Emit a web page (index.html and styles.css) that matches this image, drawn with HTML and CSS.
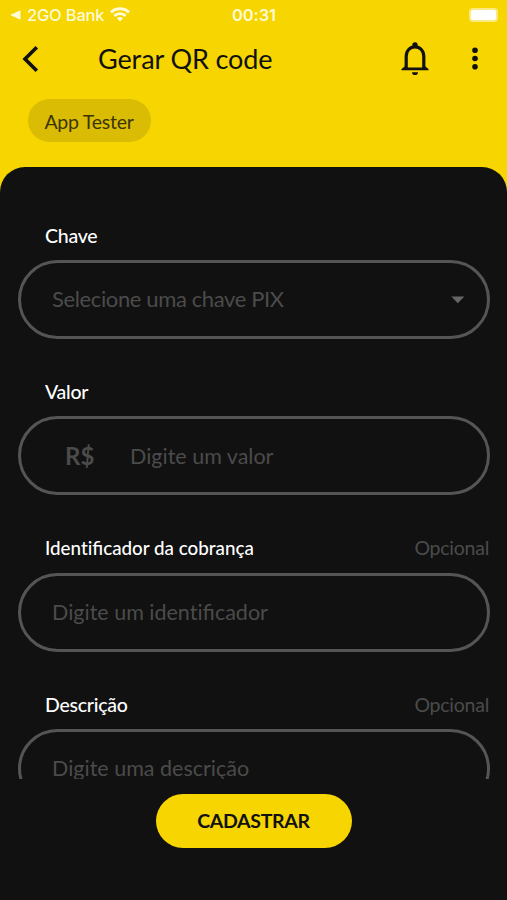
FILE: index.html
```html
<!DOCTYPE html>
<html lang="pt-BR">
<head>
  <meta charset="UTF-8">
  <title>Gerar QR code</title>
  <link rel="stylesheet" href="styles.css">
</head>
<body>

  <!-- Header -->
  <header class="header">
    <div class="status-bar">
      <div class="status-left">
        <svg width="11" height="10" viewBox="0 0 11 10"><path d="M0 5 L10.5 0.3 V9.7 Z" fill="currentColor"/></svg>
        <span class="status-app">2GO Bank</span>
        <svg class="wifi" width="20" height="15" viewBox="0 0 20 15" fill="none" stroke="currentColor" stroke-width="2.9">
          <path d="M1 5.4 A12.8 12.8 0 0 1 19 5.4"/>
          <path d="M4.3 8.9 A8.2 8.2 0 0 1 15.7 8.9"/>
          <path d="M10 14.5 L6.8 11.3 A4.6 4.6 0 0 1 13.2 11.3 Z" fill="currentColor" stroke="none"/>
        </svg>
      </div>
      <span class="status-time">00:31</span>
      <div class="battery"><span class="battery-level"></span></div>
    </div>

    <div class="title-bar">
      <svg class="back" width="18" height="28" viewBox="0 0 18 28"><path d="M14.8 2.2 L3 14 L14.8 25.8" fill="none" stroke="currentColor" stroke-width="3.6"/></svg>
      <h1>Gerar QR code</h1>
      <svg class="bell" width="28" height="34" viewBox="0 0 28 34">
        <circle cx="14" cy="2.9" r="2.7" fill="currentColor"/>
        <path d="M5.2 27 V14.5 C5.2 8.7 9 4.9 14 4.9 C19 4.9 22.8 8.7 22.8 14.5 V27" fill="none" stroke="currentColor" stroke-width="3.2"/>
        <path d="M0.4 28.3 V27.2 L3.8 24.2 V25.6 H24.2 V24.2 L27.6 27.2 V28.3 Z" fill="currentColor"/>
        <path d="M11 30.2 H17 A3 2.8 0 0 1 11 30.2 Z" fill="currentColor"/>
      </svg>
      <svg class="menu" width="6" height="24" viewBox="0 0 6 24" fill="currentColor">
        <circle cx="3" cy="3.3" r="2.8"/>
        <circle cx="3" cy="11.5" r="2.8"/>
        <circle cx="3" cy="19.7" r="2.8"/>
      </svg>
    </div>

    <span class="chip">App Tester</span>
  </header>

  <!-- Form -->
  <main class="sheet">
    <div class="fields">
      <div class="field">
        <div class="field-head"><span class="label">Chave</span></div>
        <div class="input input-select">
          <span class="placeholder">Selecione uma chave PIX</span>
          <svg class="arrow" width="14" height="8" viewBox="0 0 14 8"><path d="M0.3 0.5 H13.3 L6.8 7.2 Z" fill="currentColor"/></svg>
        </div>
      </div>

      <div class="field">
        <div class="field-head"><span class="label">Valor</span></div>
        <div class="input input-money">
          <span class="currency">R$</span>
          <span class="placeholder">Digite um valor</span>
        </div>
      </div>

      <div class="field">
        <div class="field-head field-head-long">
          <span class="label"><span class="no-liga">Ident</span>ificador da cobrança</span>
          <span class="optional">Opcional</span>
        </div>
        <div class="input"><span class="placeholder"><span class="no-liga">Digite um ident</span>ificador</span></div>
      </div>

      <div class="field">
        <div class="field-head">
          <span class="label">Descrição</span>
          <span class="optional">Opcional</span>
        </div>
        <div class="input"><span class="placeholder">Digite uma descrição</span></div>
      </div>
    </div>

    <button class="submit">CADASTRAR</button>
  </main>

</body>
</html>
```
FILE: styles.css
```css
* {
  box-sizing: border-box;
}

body {
  margin: 0;
  height: 900px;
  display: flex;
  flex-direction: column;
  overflow: hidden;
  background: #f6d500;
  color: #111;
  font-family: Lato, sans-serif;
}

.header {
  height: 167px;
  flex-shrink: 0;
}

.status-bar {
  display: grid;
  grid-template-columns: 1fr auto 1fr;
  align-items: center;
  height: 29px;
  padding: 0 9px 0 10px;
  color: #fffbd6;
  font-family: Inter, sans-serif;
}

.status-left {
  display: flex;
  align-items: center;
}

.status-app {
  margin-left: 6px;
  font-size: 16.5px;
  font-weight: 500;
  letter-spacing: -0.2px;
}

.wifi {
  margin-left: 6px;
}

.status-time {
  font-size: 16.5px;
  font-weight: 600;
  letter-spacing: -0.1px;
}

.battery {
  justify-self: end;
  width: 29px;
  height: 14px;
  padding: 2px;
  border-radius: 4px;
  background: #fbea80;
}

.battery-level {
  display: block;
  height: 10px;
  border-radius: 2px;
  background: #fff;
}

.title-bar {
  display: flex;
  align-items: center;
  height: 59px;
  padding: 0 29px 0 22px;
}

h1 {
  margin: 0 auto 0 58px;
  font-size: 27px;
  font-weight: 400;
  line-height: 34px;
  letter-spacing: -0.1px;
}

.menu {
  margin-left: 43px;
}

.chip {
  display: flex;
  align-items: center;
  justify-content: center;
  width: 123px;
  height: 43px;
  margin: 11px 0 0 28px;
  padding: 2px 1px 0 0;
  border-radius: 22px;
  background: #d9bc03;
  color: #3c3505;
  font-size: 19.5px;
  letter-spacing: -0.25px;
}

.sheet {
  flex: 1;
  border-radius: 25px 25px 0 0;
  background: #111;
}

/* the last field is cut off above the button */
.fields {
  height: 612px;
  padding: 53px 17px 0 18px;
  overflow: hidden;
}

.field {
  height: 156.3px;
}

.field-head {
  display: flex;
  justify-content: space-between;
  height: 40px;
  padding: 0 1px 0 27px;
  font-size: 19.5px;
  line-height: 31px;
  letter-spacing: -0.25px;
}

.label {
  color: #fff;
  font-weight: 500;
}

.field-head-long {
  line-height: 30px;
}

/* letter-spacing turns the fi ligature off, so size the text instead */
.field-head-long .label {
  font-size: 18.8px;
  letter-spacing: normal;
}

.no-liga {
  font-variant-ligatures: none;
}

.optional {
  color: #4b4b4b;
}

.input {
  display: flex;
  align-items: center;
  justify-content: space-between;
  height: 79px;
  padding: 0 22px 0 31px;
  border: 3px solid #555;
  border-radius: 40px;
  color: #4b4b4b;
  font-size: 21.5px;
}

.input-select {
  font-size: 22px;
  letter-spacing: -0.38px;
}

.input-select .placeholder {
  padding-bottom: 2px;
}

.arrow {
  color: #666;
}

.input-money {
  justify-content: flex-start;
  padding-left: 44px;
}

.currency {
  width: 65px;
  font-size: 24px;
  font-weight: 700;
}

.submit {
  display: block;
  width: 196px;
  height: 54px;
  margin: 14.5px auto 0;
  padding: 0;
  border: none;
  border-radius: 27px;
  background: #f6d500;
  color: #111;
  font-family: inherit;
  font-size: 19.5px;
  font-weight: 700;
  letter-spacing: -0.3px;
}
```
